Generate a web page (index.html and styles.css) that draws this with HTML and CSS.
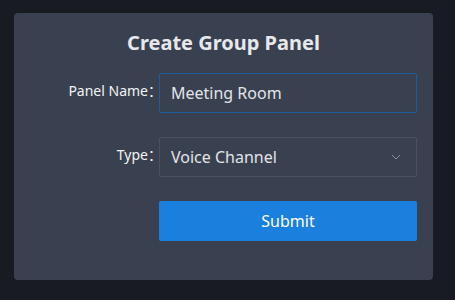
FILE: index.html
```html
<!DOCTYPE html>
<html>
<head>
<meta charset="utf-8">
<link rel="stylesheet" href="styles.css">
</head>
<body>
<div class="panel">
  <h1 class="title">Create Group Panel</h1>
  <div class="form">
    <div class="row">
      <label class="label">Panel Name：</label>
      <div class="control input focused">Meeting Room</div>
    </div>
    <div class="row">
      <label class="label">Type：</label>
      <div class="control input select">
        <span>Voice Channel</span>
        <svg class="arrow" width="12" height="12" viewBox="0 0 12 12"><path d="M2 4 L6 8 L10 4" fill="none" stroke="#8a909b" stroke-width="1"/></svg>
      </div>
    </div>
    <div class="row">
      <div class="label"></div>
      <button class="control btn">Submit</button>
    </div>
  </div>
</div>
</body>
</html>
```
FILE: styles.css
```css
html, body {
  margin: 0;
  padding: 0;
  background: #181b22;
  font-family: "Noto Sans", "Noto Sans CJK SC", sans-serif;
}
body {
  padding: 13px 22px 20px 14px;
  width: 455px;
  height: 300px;
  box-sizing: border-box;
}
.panel {
  background: #394150;
  border-radius: 4px;
  height: 267px;
  width: 419px;
  box-sizing: border-box;
  padding: 17px 16px 0 0;
}
.title {
  margin: 0 0 17px 16px;
  text-align: center;
  color: #e6e8ec;
  font-size: 20px;
  font-weight: 700;
  line-height: 26px;
}
.form {
  display: flex;
  flex-direction: column;
  gap: 24px;
}
.row {
  display: flex;
  align-items: center;
  gap: 0;
}
.label {
  width: 148px;
  text-align: right;
  color: #f2f3f5;
  font-size: 14px;
  margin-top: -6px;
  margin-right: -3px;
}
.control {
  width: 258px;
  height: 40px;
  box-sizing: border-box;
}
.input {
  border: 1px solid #4a5262;
  border-radius: 2px;
  padding: 0 11px;
  color: #e2e4e8;
  font-size: 16px;
  display: flex;
  align-items: center;
}
.focused {
  border-color: #1f5d9a;
}
.select {
  justify-content: space-between;
}
.arrow {
  margin-right: 3px;
}
.btn {
  background: #1a7fdd;
  border: none;
  border-radius: 2px;
  color: #ffffff;
  font-family: inherit;
  font-size: 16px;
  padding: 0;
}
```
